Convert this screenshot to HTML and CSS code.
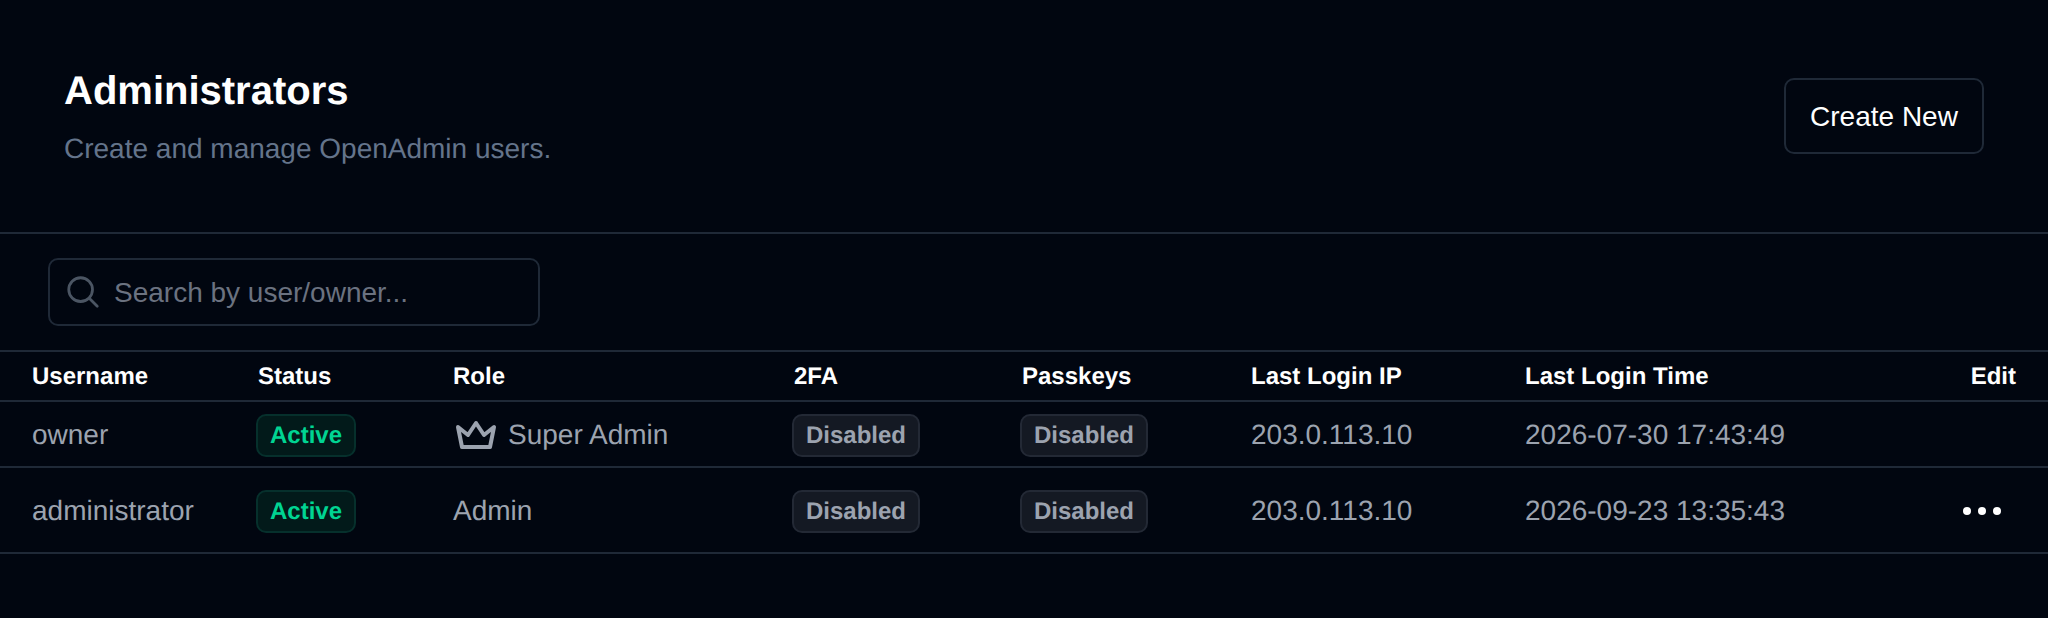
FILE: index.html
```html
<!DOCTYPE html>
<html lang="en">
<head>
    <meta charset="UTF-8">
    <meta name="viewport" content="width=device-width, initial-scale=1.0">
    <title>Administrators - OpenAdmin</title>
    <link rel="stylesheet" href="styles.css">
</head>
<body>
    <header class="page-header">
        <div>
            <h1>Administrators</h1>
            <p class="subtitle">Create and manage OpenAdmin users.</p>
        </div>
        <button class="create-button">Create New</button>
    </header>

    <div class="toolbar">
        <label class="search">
            <svg class="search-icon" viewBox="0 0 24 24" fill="none" stroke="currentColor" stroke-width="1.75" stroke-linecap="round" stroke-linejoin="round">
                <path d="m21 21-5.197-5.197m0 0A7.5 7.5 0 1 0 5.196 5.196a7.5 7.5 0 0 0 10.607 10.607Z"/>
            </svg>
            <input type="text" placeholder="Search by user/owner...">
        </label>
    </div>

    <table class="admin-table">
        <colgroup>
            <col class="col-user">
            <col class="col-status">
            <col class="col-role">
            <col class="col-2fa">
            <col class="col-passkeys">
            <col class="col-ip">
            <col class="col-time">
            <col>
        </colgroup>
        <thead>
            <tr>
                <th>Username</th>
                <th>Status</th>
                <th>Role</th>
                <th>2FA</th>
                <th>Passkeys</th>
                <th>Last Login IP</th>
                <th>Last Login Time</th>
                <th class="edit-cell">Edit</th>
            </tr>
        </thead>
        <tbody>
            <tr class="row-owner">
                <td>owner</td>
                <td><span class="badge badge-active">Active</span></td>
                <td>
                    <span class="role">
                        <svg class="crown" viewBox="0 0 24 24" fill="none" stroke="currentColor" stroke-width="2" stroke-linecap="round" stroke-linejoin="round">
                            <path d="M12 6l4 6l5 -4l-2 10h-14l-2 -10l5 4z"/>
                        </svg>
                        Super Admin
                    </span>
                </td>
                <td><span class="badge badge-off">Disabled</span></td>
                <td><span class="badge badge-off">Disabled</span></td>
                <td>203.0.113.10</td>
                <td>2026-07-30 17:43:49</td>
                <td class="edit-cell"></td>
            </tr>
            <tr class="row-admin">
                <td>administrator</td>
                <td><span class="badge badge-active">Active</span></td>
                <td>Admin</td>
                <td><span class="badge badge-off">Disabled</span></td>
                <td><span class="badge badge-off">Disabled</span></td>
                <td>203.0.113.10</td>
                <td>2026-09-23 13:35:43</td>
                <td class="edit-cell">
                    <button class="dots" aria-label="Edit"><span></span><span></span><span></span></button>
                </td>
            </tr>
        </tbody>
    </table>
</body>
</html>
```

FILE: styles.css
```css
body {
    margin: 0;
    height: 618px;
    overflow: hidden;
    background-color: #010610;
    color: #9ca3af;
    font-family: "Liberation Sans", Arial, sans-serif;
    font-size: 28px;
    text-rendering: geometricPrecision;
}

.page-header {
    display: flex;
    justify-content: space-between;
    align-items: center;
    height: 232px;
    padding: 0 64px;
    border-bottom: 2px solid #1f2937;
}

h1 {
    margin: 3px 0 13px;
    color: white;
    font-size: 40px;
    line-height: 50px;
}

.subtitle {
    margin: 0;
    color: #64748b;
    line-height: 40px;
}

.create-button {
    width: 200px;
    height: 76px;
    padding: 2px 0 0;
    border: 2px solid #1f2937;
    border-radius: 10px;
    background: transparent;
    color: white;
    font: inherit;
}

.toolbar {
    padding: 24px 48px 24px;
}

.search {
    display: flex;
    align-items: center;
    gap: 12px;
    box-sizing: border-box;
    width: 492px;
    height: 68px;
    padding-left: 14px;
    border: 2px solid #1f2937;
    border-radius: 10px;
    color: #4b5563;
}

.search-icon {
    width: 38px;
    height: 38px;
    flex-shrink: 0;
}

.search input {
    flex-grow: 1;
    min-width: 0;
    padding: 2px 0 0;
    border: none;
    outline: none;
    background: transparent;
    color: #9ca3af;
    font: inherit;
}

.search input::placeholder {
    color: #6b7280;
    opacity: 1;
}

.admin-table {
    width: 100%;
    table-layout: fixed;
    border-collapse: collapse;
    border-top: 2px solid #1f2937;
}

.col-user { width: 226px; }
.col-status { width: 195px; }
.col-role { width: 341px; }
.col-2fa { width: 228px; }
.col-passkeys { width: 229px; }
.col-ip { width: 274px; }
.col-time { width: 400px; }

th, td {
    padding: 2px 0 0 32px;
    border-bottom: 2px solid #1f2937;
    text-align: left;
    white-space: nowrap;
}

th {
    height: 46px;
    color: white;
    font-size: 24px;
}

.row-owner td { height: 62px; }
.row-admin td { height: 82px; }

th.edit-cell, td.edit-cell {
    padding-right: 32px;
    padding-left: 0;
    text-align: right;
}

.badge {
    display: inline-block;
    box-sizing: border-box;
    height: 43px;
    margin-left: -2px;
    padding: 0 12px;
    border: 2px solid;
    border-radius: 10px;
    font-size: 24px;
    font-weight: bold;
    line-height: 39px;
    vertical-align: middle;
}

.badge-active {
    border-color: #06302c;
    background-color: #021a1a;
    color: #00d492;
}

.badge-off {
    border-color: #232935;
    background-color: #141923;
    color: #9ca3af;
}

.role {
    display: flex;
    align-items: center;
    gap: 8px;
}

.crown {
    width: 48px;
    height: 48px;
    flex-shrink: 0;
    margin-left: -1px;
}

.dots {
    display: flex;
    justify-content: flex-end;
    gap: 7px;
    width: 100%;
    padding: 0 15px 0 0;
    border: none;
    background: transparent;
}

.dots span {
    width: 8px;
    height: 8px;
    border-radius: 50%;
    background-color: white;
}
```
